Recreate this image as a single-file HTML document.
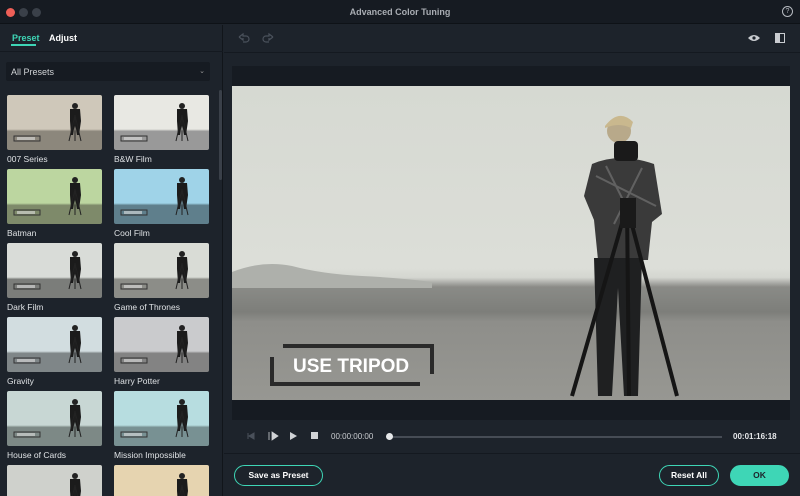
<!DOCTYPE html>
<html style="overflow:hidden;width:800px;height:496px"><head><meta charset="utf-8"><style>
*{margin:0;padding:0;box-sizing:border-box}
body{width:800px;height:496px;background:#1d232b;font-family:"Liberation Sans",sans-serif;position:relative;overflow:hidden;color:#e6e8ea}
.abs{position:absolute}
.tb{left:0;top:0;width:800px;height:24px;background:#161b22;border-bottom:1px solid #0e1217}
.dot{width:9px;height:9px;border-radius:50%;top:8px;background:#3a4049}
.title{left:0;width:800px;top:7px;text-align:center;font-size:9px;font-weight:bold;color:#a9adb3}
.left{left:0;top:25px;width:223px;height:471px;background:#1d232b;border-right:1px solid #11151a}
.tab{font-size:9px;font-weight:bold;top:33px}
.dd{left:6px;top:62px;width:204px;height:19px;background:#161b22;border-radius:2px;font-size:9px;color:#d0d3d6;padding:5px 5px}
.th{width:95px;height:55px;overflow:hidden;border-radius:2px}
.lb{font-size:8.5px;color:#dfe2e5}
.btn{top:465px;height:21px;border:1.5px solid #3ed6b6;border-radius:11px;font-size:8.5px;font-weight:bold;text-align:center;line-height:18px;color:#fff}
</style></head><body>
<div class="abs tb"></div>
<div class="abs dot" style="left:6px;background:#ee5f57"></div>
<div class="abs dot" style="left:19px"></div>
<div class="abs dot" style="left:32px"></div>
<div class="abs title">Advanced Color Tuning</div>
<div class="abs" style="left:782px;top:6px;width:11px;height:11px;border:1px solid #b6bac0;border-radius:50%;font-size:7px;text-align:center;line-height:9px;color:#b6bac0">?</div>

<div class="abs left"></div>
<div class="abs tab" style="left:12px;color:#3ed6b6">Preset</div>
<div class="abs" style="left:11px;top:44px;width:25px;height:2px;background:#3ed6b6"></div>
<div class="abs tab" style="left:49px;color:#fff">Adjust</div>
<div class="abs" style="left:0;top:51px;width:223px;height:1px;background:#141920"></div>
<div class="abs dd">All Presets<span style="float:right;font-size:7px;color:#999">&#8964;</span></div>
<div class="abs" style="left:219px;top:90px;width:3px;height:90px;background:#3a4049;border-radius:2px"></div>

<svg width="0" height="0" style="position:absolute"><defs>
<g id="fig"><rect x="65" y="8" width="6" height="6" rx="3" fill="#222"/><path d="M63 14h10l1 12-2 14h-2l-2-12-2 12h-2l-1-14z" fill="#1b1b1b"/><path d="M68 20l-6 26M68 20l6 26M68 20v26" stroke="#222" stroke-width="1"/><rect x="7" y="41" width="26" height="5" fill="none" stroke="#333" stroke-width="1"/><rect x="10" y="42" width="18" height="3" fill="#ddd" opacity=".6"/></g>
</defs></svg>

<div id="thumbs"></div>
<script>
var d=[["007 Series","#cfc8ba","#8c877c"],["B&W Film","#e8e8e3","#999"],["Batman","#bcd6a0","#7e8a6a"],["Cool Film","#9fd3e8","#5f7f8c"],["Dark Film","#d9dcd8","#7b7d7a"],["Game of Thrones","#d9dcd6","#8c8d88"],["Gravity","#d2dde0","#7f8688"],["Harry Potter","#cacbcd","#838383"],["House of Cards","#c8d7d4","#7d8986"],["Mission Impossible","#b7dde0","#789193"],["","#cfd1cc","#888"],["","#e6d4b0","#9a8c70"]];
var h="";
for(var i=0;i<d.length;i++){var c=i%2,r=Math.floor(i/2);var x=c?114:7,y=95+r*74;
h+='<div class="abs th" style="left:'+x+'px;top:'+y+'px;background:linear-gradient('+d[i][1]+' 0%,'+d[i][1]+' 62%,'+d[i][2]+' 66%,'+d[i][2]+' 100%)"><svg width="95" height="55" viewBox="0 0 95 55"><use href="#fig"/></svg></div>';
if(d[i][0])h+='<div class="abs lb" style="left:'+x+'px;top:'+(y+59)+'px">'+d[i][0].replace("&","&amp;")+'</div>';}
document.getElementById("thumbs").innerHTML=h;
</script>

<div class="abs" style="left:224px;top:52px;width:576px;height:1px;background:#141920"></div>
<svg class="abs" style="left:236px;top:32px" width="40" height="12" viewBox="0 0 40 12"><path d="M3 5l4-3v2h3a3 3 0 010 6H7M3 5l4 3V6" fill="none" stroke="#4a515b" stroke-width="1.2"/><path d="M37 5l-4-3v2h-3a3 3 0 000 6h3M37 5l-4 3V6" fill="none" stroke="#4a515b" stroke-width="1.2"/></svg>
<svg class="abs" style="left:748px;top:34px" width="12" height="8" viewBox="0 0 12 8"><path d="M0 4Q6-2 12 4Q6 10 0 4z" fill="#c9ccd0"/><circle cx="6" cy="4" r="1.6" fill="#1d232b"/></svg>
<div class="abs" style="left:775px;top:33px;width:10px;height:10px;border:1px solid #c9ccd0;background:linear-gradient(90deg,#c9ccd0 50%,#1d232b 50%)"></div>

<div class="abs" style="left:232px;top:66px;width:558px;height:354px;background:#161b22"></div>
<div class="abs" style="left:232px;top:86px;width:558px;height:314px;overflow:hidden;background:linear-gradient(#d6d9d2 0%,#dcded8 58%,#d4d6d0 61%,#8a8b87 64%,#7d7e7a 72%,#8e8e8a 75%,#979792 100%)">
<svg width="558" height="314" viewBox="0 0 558 314">
<path d="M0 186Q30 174 60 180Q90 188 130 190Q170 192 200 196L200 202H0z" fill="#aeb0ab"/>
<circle cx="387" cy="45" r="12" fill="#b8a98a"/>
<path d="M373 40q14-18 28-4l-2 6q-12-6-26 0z" fill="#c9b88e"/>
<path d="M360 78q28-12 62 0l8 50-10 8-4 38h-50l-4-40-10-24z" fill="#3a3a3a"/>
<path d="M364 90l60 30M374 80l28 56M410 82l-28 56" stroke="#888" stroke-width="2" opacity=".5"/>
<rect x="382" y="55" width="24" height="20" rx="4" fill="#1a1a1a"/>
<path d="M362 172h48l-4 138h-14l-6-108-6 108h-14z" fill="#1f2021"/>
<path d="M395 120l-55 190M395 120l50 190M395 120l2 190" stroke="#151515" stroke-width="4"/>
<rect x="388" y="112" width="16" height="30" fill="#1a1a1a"/>
<path d="M51 260h149v28" fill="none" stroke="#2a2a2a" stroke-width="4"/>
<path d="M40 271v27h148" fill="none" stroke="#2a2a2a" stroke-width="4"/>
<text x="61" y="286" font-family="Liberation Sans" font-weight="bold" font-size="19" fill="#fff">USE TRIPOD</text>
</svg></div>

<svg class="abs" style="left:244px;top:430px" width="80" height="12" viewBox="0 0 80 12"><path d="M4 3v6M10 3L5 6l5 3z" fill="#4a515b" stroke="#4a515b"/><path d="M25 2v8M28 2l6 4-6 4z" fill="#d0d3d6" stroke="#d0d3d6" stroke-width=".8"/><path d="M46 2l7 4-7 4z" fill="#d0d3d6"/><rect x="67" y="2" width="7" height="7" fill="#d0d3d6"/></svg>
<div class="abs" style="left:331px;top:432px;font-size:8px;color:#c9ccd0">00:00:00:00</div>
<div class="abs" style="left:390px;top:436px;width:332px;height:2px;background:#464c55"></div>
<div class="abs" style="left:386px;top:433px;width:7px;height:7px;border-radius:50%;background:#e6e8ea"></div>
<div class="abs" style="left:733px;top:432px;font-size:8px;font-weight:bold;color:#e6e8ea">00:01:16:18</div>
<div class="abs" style="left:224px;top:453px;width:576px;height:1px;background:#141920"></div>

<div class="abs btn" style="left:234px;width:89px">Save as Preset</div>
<div class="abs btn" style="left:659px;width:60px">Reset All</div>
<div class="abs btn" style="left:730px;width:59px;background:#3ed6b6;color:#1d232b">OK</div>
</body></html>
